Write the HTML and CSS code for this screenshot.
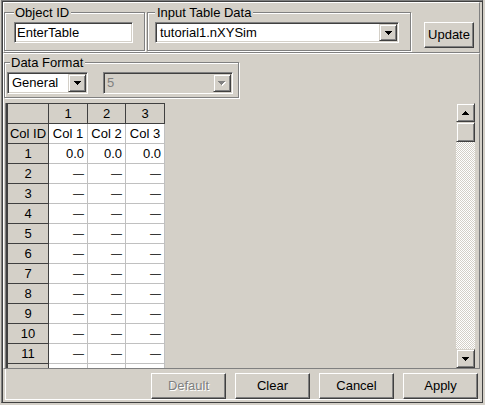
FILE: index.html
```html
<!DOCTYPE html>
<html>
<head>
<meta charset="utf-8">
<title>Enter Table</title>
<link rel="stylesheet" href="styles.css">
</head>
<body>
<div class="window">
  <div class="panel top">
    <fieldset class="group group-obj">
      <legend>Object ID</legend>
      <div class="textbox">EnterTable</div>
    </fieldset>
    <fieldset class="group group-input">
      <legend>Input Table Data</legend>
      <div class="combo combo-wide">
        <span class="combo-text">tutorial1.nXYSim</span>
        <span class="drop"><svg class="arrow" width="7" height="4" viewBox="0 0 7 4"><path d="M0 0H7V1H6V2H5V3H4V4H3V3H2V2H1V1H0Z"/></svg></span>
      </div>
    </fieldset>
    <button class="btn btn-update">Update</button>
  </div>
  <div class="panel mid">
    <fieldset class="group group-format">
      <legend>Data Format</legend>
      <div class="format-row">
        <div class="combo combo-general">
          <span class="combo-text">General</span>
          <span class="drop"><svg class="arrow" width="7" height="4" viewBox="0 0 7 4"><path d="M0 0H7V1H6V2H5V3H4V4H3V3H2V2H1V1H0Z"/></svg></span>
        </div>
        <div class="combo combo-disabled">
          <span class="combo-text">5</span>
          <span class="drop"><svg class="arrow arrow-off" width="8" height="5" viewBox="0 0 8 5"><path class="hl" d="M1 1H8V2H7V3H6V4H5V5H4V4H3V3H2V2H1Z"/><path d="M0 0H7V1H6V2H5V3H4V4H3V3H2V2H1V1H0Z"/></svg></span>
        </div>
      </div>
    </fieldset>
    <div class="grid-area">
      <div class="viewport">
        <div class="sheet">
          <div class="hd"></div><div class="hd">1</div><div class="hd">2</div><div class="hd">3</div>
          <div class="hd">Col ID</div><div class="cell name">Col 1</div><div class="cell name">Col 2</div><div class="cell name">Col 3</div>
          <div class="hd">1</div><div class="cell">0.0</div><div class="cell">0.0</div><div class="cell">0.0</div>
          <div class="hd">2</div><div class="cell dash">—</div><div class="cell dash">—</div><div class="cell dash">—</div>
          <div class="hd">3</div><div class="cell dash">—</div><div class="cell dash">—</div><div class="cell dash">—</div>
          <div class="hd">4</div><div class="cell dash">—</div><div class="cell dash">—</div><div class="cell dash">—</div>
          <div class="hd">5</div><div class="cell dash">—</div><div class="cell dash">—</div><div class="cell dash">—</div>
          <div class="hd">6</div><div class="cell dash">—</div><div class="cell dash">—</div><div class="cell dash">—</div>
          <div class="hd">7</div><div class="cell dash">—</div><div class="cell dash">—</div><div class="cell dash">—</div>
          <div class="hd">8</div><div class="cell dash">—</div><div class="cell dash">—</div><div class="cell dash">—</div>
          <div class="hd">9</div><div class="cell dash">—</div><div class="cell dash">—</div><div class="cell dash">—</div>
          <div class="hd">10</div><div class="cell dash">—</div><div class="cell dash">—</div><div class="cell dash">—</div>
          <div class="hd">11</div><div class="cell dash">—</div><div class="cell dash">—</div><div class="cell dash">—</div>
          <div class="hd">12</div><div class="cell dash">—</div><div class="cell dash">—</div><div class="cell dash">—</div>
        </div>
      </div>
      <div class="vscroll">
        <span class="sb-btn"><svg class="arrow" width="7" height="4" viewBox="0 0 7 4"><path d="M3 0H4V1H5V2H6V3H7V4H0V3H1V2H2V1H3Z"/></svg></span>
        <span class="sb-thumb"></span>
        <span class="sb-track"></span>
        <span class="sb-btn"><svg class="arrow" width="7" height="4" viewBox="0 0 7 4"><path d="M0 0H7V1H6V2H5V3H4V4H3V3H2V2H1V1H0Z"/></svg></span>
      </div>
    </div>
  </div>
  <div class="bottom">
    <button class="btn btn-action btn-disabled">Default</button>
    <button class="btn btn-action">Clear</button>
    <button class="btn btn-action">Cancel</button>
    <button class="btn btn-action">Apply</button>
  </div>
</div>
</body>
</html>
```

FILE: styles.css
```css
* {
  box-sizing: border-box;
}

body {
  margin: 0;
  background: #d4d0c8;
  font-family: "Liberation Sans", Arial, sans-serif;
  font-size: 13px;
  color: #000;
}

.window {
  margin-left: 1px;
  width: 482px;
  height: 403px;
  border: 1px solid #404040;
  border-top-color: #808080;
  border-left-color: #808080;
  box-shadow: inset 1px 1px #404040;
  padding: 1px 2px 0 1px;
}

.panel {
  border: 1px solid;
  border-color: #fff #808080 #808080 #fff;
}

.top {
  height: 51px;
  display: flex;
  align-items: flex-start;
}

.mid {
  height: 316px;
}

/* group boxes */
.group {
  margin: 0;
  min-width: 0;
  border: 1px solid #808080;
  box-shadow: inset 1px 1px #fff, 1px 1px #fff;
  padding: 2px 0 0 0;
}

.group legend {
  line-height: 15px;
  padding: 0 2px 0 1px;
  background: #d4d0c8;
}

.group-obj {
  margin-top: 2px;
  width: 141px;
  height: 46px;
  padding-left: 9px;
}

.group-input {
  margin: 2px 0 0 2px;
  width: 264px;
  height: 46px;
  padding-left: 7px;
}

.group-input legend {
  padding-left: 2px;
}

.group-format {
  margin-top: 1px;
  width: 235px;
  height: 43px;
  padding-left: 5px;
}

/* fields */
.textbox,
.combo {
  border: 1px solid;
  border-color: #808080 #fff #fff #808080;
  box-shadow: inset 1px 1px #404040, inset -1px -1px #d4d0c8;
  background: #fff;
  padding: 1px;
  line-height: 17px;
  white-space: nowrap;
}

.textbox {
  width: 119px;
  height: 21px;
  padding-left: 2px;
}

.combo {
  display: flex;
}

.combo-text {
  flex: 1;
  padding-left: 3px;
}

.combo-wide {
  width: 244px;
  height: 21px;
}

.format-row {
  display: flex;
  margin-left: -3px;
}

.combo-general {
  width: 81px;
  height: 22px;
  line-height: 18px;
}

.combo-disabled {
  width: 130px;
  height: 22px;
  margin-left: 15px;
  line-height: 18px;
  background: #d4d0c8;
  color: #808080;
}

.combo-disabled .combo-text {
  padding-left: 2px;
}

.drop,
.sb-btn,
.sb-thumb {
  display: flex;
  align-items: center;
  justify-content: center;
  background: #d4d0c8;
  border: 1px solid;
  border-color: #d4d0c8 #404040 #404040 #d4d0c8;
  box-shadow: inset 1px 1px #fff, inset -1px -1px #808080;
}

.drop {
  width: 18px;
}

.arrow {
  display: block;
  fill: #000;
  shape-rendering: crispEdges;
}

.arrow-off {
  fill: #808080;
}

.arrow-off .hl {
  fill: #fff;
}

/* buttons */
.btn {
  font: inherit;
  color: #000;
  background: #d4d0c8;
  border: 1px solid;
  border-color: #fff #404040 #404040 #fff;
  box-shadow: inset -1px -1px #808080;
  padding: 0;
  line-height: 22px;
}

.btn-update {
  margin: 19px 0 0 13px;
  width: 50px;
  height: 26px;
}

.btn-disabled {
  color: #808080;
  text-shadow: 1px 1px #fff;
}

/* grid */
.grid-area {
  display: flex;
  margin: 5px 0 0 1px;
  height: 265px;
  border-left: 1px solid #808080;
}

.viewport {
  width: 450px;
  border-left: 1px solid #404040;
  overflow: hidden;
}

.sheet {
  display: grid;
  grid-template-columns: 41px 39px 38px 39px;
  grid-auto-rows: 20px;
  width: max-content;
  border-top: 1px solid #404040;
  border-left: 1px solid #404040;
}

.hd,
.cell {
  border-right: 1px solid;
  border-bottom: 1px solid;
  line-height: 19px;
  white-space: nowrap;
  overflow: hidden;
}

.hd {
  background: #d4d0c8;
  border-color: #404040;
  text-align: center;
}

.cell {
  background: #fff;
  border-color: #c0c0c0;
  text-align: right;
  padding-right: 3px;
}

.cell.name {
  text-align: center;
  padding-right: 0;
}

.cell.dash {
  font-size: 11px;
}

.vscroll {
  width: 19px;
  display: flex;
  flex-direction: column;
}

.sb-btn {
  height: 19px;
}

.sb-thumb {
  height: 20px;
}

.sb-track {
  flex: 1;
  background: repeating-conic-gradient(#fff 0 25%, #d4d0c8 0 50%) 0 0 / 2px 2px;
}

/* bottom bar */
.bottom {
  margin-left: 2px;
  height: 31px;
  border-left: 1px solid #fff;
  border-bottom: 1px solid #fff;
  display: flex;
  justify-content: flex-end;
  gap: 9px;
  padding: 4px 2px 0 0;
}

.btn-action {
  width: 75px;
  height: 26px;
}
```
